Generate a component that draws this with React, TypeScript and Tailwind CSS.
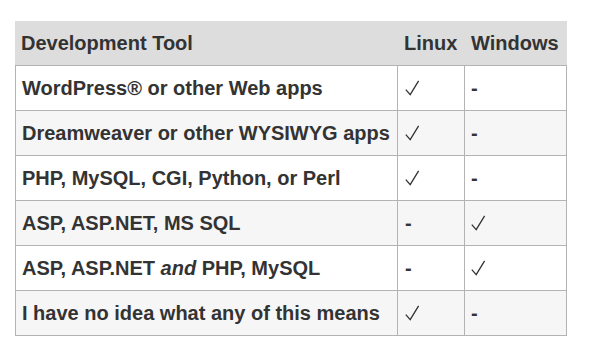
import React from 'react';

type Mark = 'yes' | 'no';

interface Row {
  tool: React.ReactNode;
  linux: Mark;
  windows: Mark;
}

const rows: Row[] = [
  { tool: 'WordPress® or other Web apps', linux: 'yes', windows: 'no' },
  { tool: 'Dreamweaver or other WYSIWYG apps', linux: 'yes', windows: 'no' },
  { tool: 'PHP, MySQL, CGI, Python, or Perl', linux: 'yes', windows: 'no' },
  { tool: 'ASP, ASP.NET, MS SQL', linux: 'no', windows: 'yes' },
  {
    tool: (
      <>
        ASP, ASP.NET <em className="italic">and</em> PHP, MySQL
      </>
    ),
    linux: 'no',
    windows: 'yes',
  },
  { tool: 'I have no idea what any of this means', linux: 'yes', windows: 'no' },
];

const Check = () => (
  <svg width="15" height="16" viewBox="0 0 15 16" className="block">
    <path d="M0.8 9.6 L5.2 14.6 L13.6 0.8" fill="none" stroke="#333" strokeWidth="1.3" strokeLinejoin="miter" />
  </svg>
);

const MarkCell = ({ value }: { value: Mark }) =>
  value === 'yes' ? <Check /> : <span className="font-bold">-</span>;

export default function App() {
  return (
    <div className="w-[597px] h-[353px] bg-white pt-[21px] pl-[15px] text-[#333] text-[20px] font-['Liberation_Sans',Arial,sans-serif]">
      <div className="w-[552px]">
        {/* Header */}
        <div className="flex h-[44px] items-center bg-[#dddddd] font-bold">
          <div className="w-[382px] pl-[6px]">Development Tool</div>
          <div className="w-[67px] pl-[7px]">Linux</div>
          <div className="w-[103px] pl-[7px]">Windows</div>
        </div>

        {/* Body */}
        {rows.map((row, i) => (
          <div
            key={i}
            className={`flex border-x border-t border-[#b3b3b3] ${i === rows.length - 1 ? 'h-[46px] border-b' : 'h-[45px]'} ${i % 2 === 1 ? 'bg-[#f6f6f6]' : 'bg-white'}`}
          >
            <div className="w-[381px] pl-[6px] flex items-center font-bold whitespace-nowrap">
              <span>{row.tool}</span>
            </div>
            <div className="w-[67px] border-l border-[#b3b3b3] pl-[7px] flex items-center">
              <MarkCell value={row.linux} />
            </div>
            <div className="w-[102px] border-l border-[#b3b3b3] pl-[6px] flex items-center">
              <MarkCell value={row.windows} />
            </div>
          </div>
        ))}
      </div>
    </div>
  );
}
